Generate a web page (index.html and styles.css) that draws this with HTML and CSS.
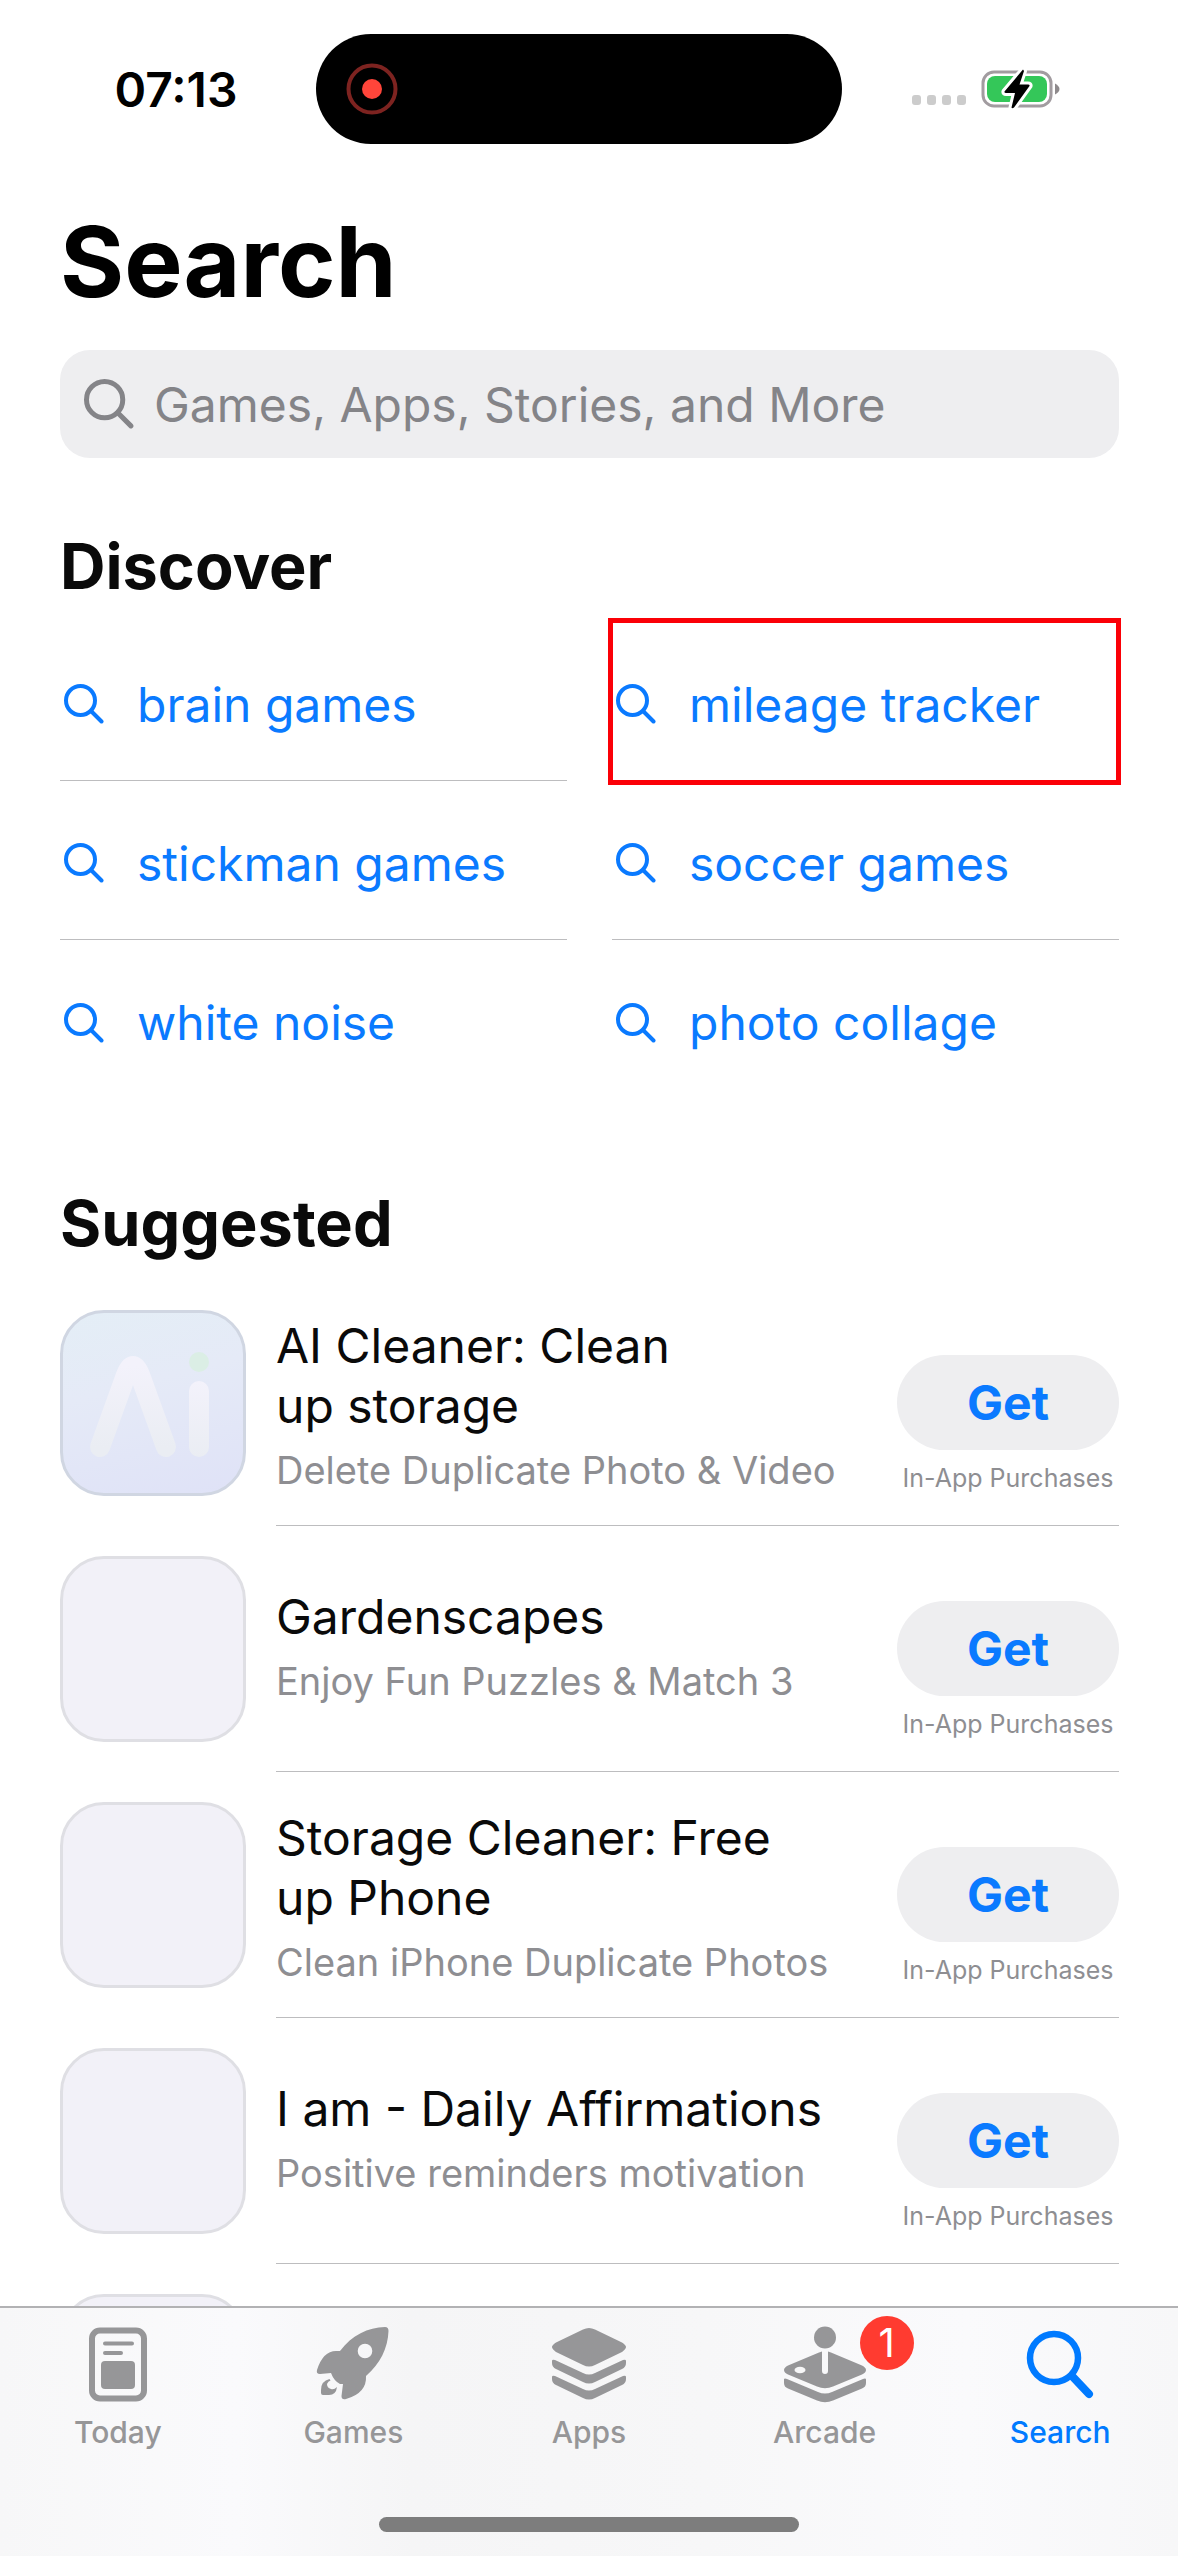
FILE: index.html
```html
<!DOCTYPE html>
<html lang="en">
<head>
<meta charset="utf-8">
<meta name="viewport" content="width=device-width, initial-scale=1">
<title>Search</title>
<link rel="stylesheet" href="styles.css">
</head>
<body>
<svg class="sprite" aria-hidden="true">
  <symbol id="lens" viewBox="0 0 40 40"><circle cx="16.500" cy="16.500" r="14.500"/><path d="M27 27L37.500 37.500"/></symbol>
</svg>
<div class="screen">
  <header class="status">
    <time class="clock">07:13</time>
    <div class="island">
      <svg class="record" viewBox="0 0 52 52" aria-hidden="true"><circle cx="26" cy="26" r="23.500" fill="none" stroke="#7d2320" stroke-width="4"/><circle cx="26" cy="26" r="10" fill="#ff453a"/></svg>
    </div>
    <div class="indicators">
      <span class="signal"><i></i><i></i><i></i><i></i></span>
      <svg class="battery" viewBox="0 0 80 40" aria-hidden="true">
        <rect x="2" y="3" width="68" height="34" rx="11" fill="none" stroke="#a29ca0" stroke-width="3"/>
        <rect x="6" y="7" width="60" height="26" rx="8" fill="#34c759"/>
        <path d="M74 14.500Q78.500 17 78.500 20T74 25.500Z" fill="#8e8a8c"/>
        <path d="M42 .5L23.500 22.500Q23 24 25 24H34L30.500 38.500Q31 40 33 38.500L48.500 17Q49 15.500 47 15.500H38.500L43 2Z" fill="#000" stroke="#fff" stroke-width="6" stroke-linejoin="round" paint-order="stroke"/>
      </svg>
    </div>
  </header>

  <main class="content">
    <h1>Search</h1>
    <form class="field" role="search">
      <label for="q"><svg class="lens" role="img" aria-label="Search"><use href="#lens"/></svg></label>
      <input id="q" type="search" placeholder="Games, Apps, Stories, and More">
    </form>

    <section>
      <h2>Discover</h2>
      <ul class="topics">
        <li><a href="#"><svg class="lens" aria-hidden="true"><use href="#lens"/></svg>brain games</a></li>
        <li class="highlighted"><a href="#"><svg class="lens" aria-hidden="true"><use href="#lens"/></svg>mileage tracker</a></li>
        <li><a href="#"><svg class="lens" aria-hidden="true"><use href="#lens"/></svg>stickman games</a></li>
        <li><a href="#"><svg class="lens" aria-hidden="true"><use href="#lens"/></svg>soccer games</a></li>
        <li><a href="#"><svg class="lens" aria-hidden="true"><use href="#lens"/></svg>white noise</a></li>
        <li><a href="#"><svg class="lens" aria-hidden="true"><use href="#lens"/></svg>photo collage</a></li>
      </ul>
    </section>

    <section class="suggested">
      <h2>Suggested</h2>
      <ul class="apps">
        <li class="app">
          <span class="app-icon app-icon-cleaner">
            <svg viewBox="0 0 180 180" aria-hidden="true">
              <defs><linearGradient id="ink" x1="0" y1="0" x2="0" y2="1"><stop offset="0" stop-color="#f3f2fb"/><stop offset="1" stop-color="#eaedf3"/></linearGradient></defs>
              <path d="M37 134L63 62Q70 44 77 62L103 134" fill="none" stroke="url(#ink)" stroke-width="20" stroke-linecap="round" stroke-linejoin="round"/>
              <rect x="126" y="68" width="20" height="76" rx="10" fill="url(#ink)"/>
              <circle cx="136" cy="49" r="10" fill="#dbeee5"/>
            </svg>
          </span>
          <div class="app-body">
            <div class="app-text app-text-wrapped"><h3>AI Cleaner: Clean<br>up storage</h3><p>Delete Duplicate Photo &amp; Video</p></div>
            <div class="offer"><button type="button">Get</button><small>In-App Purchases</small></div>
          </div>
        </li>
        <li class="app">
          <span class="app-icon"></span>
          <div class="app-body">
            <div class="app-text"><h3>Gardenscapes</h3><p>Enjoy Fun Puzzles &amp; Match 3</p></div>
            <div class="offer"><button type="button">Get</button><small>In-App Purchases</small></div>
          </div>
        </li>
        <li class="app">
          <span class="app-icon"></span>
          <div class="app-body">
            <div class="app-text app-text-wrapped"><h3>Storage Cleaner: Free<br>up Phone</h3><p>Clean iPhone Duplicate Photos</p></div>
            <div class="offer"><button type="button">Get</button><small>In-App Purchases</small></div>
          </div>
        </li>
        <li class="app">
          <span class="app-icon"></span>
          <div class="app-body">
            <div class="app-text"><h3>I am - Daily Affirmations</h3><p>Positive reminders motivation</p></div>
            <div class="offer"><button type="button">Get</button><small>In-App Purchases</small></div>
          </div>
        </li>
        <li class="app"><span class="app-icon"></span></li>
      </ul>
    </section>
  </main>

  <footer class="bar">
    <nav class="tabs">
      <a href="#"><svg width="84" height="78" viewBox="0 0 84 78" aria-hidden="true"><rect x="16" y="5.500" width="52" height="68" rx="8" fill="none" stroke="currentColor" stroke-width="6"/><path d="M29 18.500H56M29 28H45" stroke="currentColor" stroke-width="4" stroke-linecap="round"/><rect x="25" y="36" width="34" height="28" rx="4"/></svg>Today</a>
      <a href="#"><svg width="84" height="78" viewBox="11 14 84 78" aria-hidden="true"><path fill-rule="evenodd" d="M40 40C52 24 68 16.500 85 16Q88.500 16 88.500 20C88 37 80 53 66 65Q67 82 46 88Q41.500 89 41.500 85L43 73H40Q34 70 31 62L20 63Q16 63 17 59Q23 40 36 40ZM72.300 40a7.300 7.300 0 1 0-14.600 0a7.300 7.300 0 1 0 14.600 0Z"/><path d="M29.500 68Q21 70 21 79V82Q21 84 23 84H29Q36 84 37 76Q34 79 31 78Q27 77 27 73Q28 70 30.500 69.500Z"/></svg>Games</a>
      <a href="#"><svg width="84" height="78" viewBox="0 0 84 78" aria-hidden="true"><path d="M36 4.500Q42 1.500 48 4.500L75 17.500Q79 20 79 22T75 27L48 40Q42 43 36 40L9 27Q5 24 5 22T9 17.500Z"/><path d="M5 38V36Q5 34 8 35L36 48Q42 51 48 48L76 35Q79 34 79 36V38Q79 42 75 44L48 57Q42 60 36 57L9 44Q5 42 5 38Z"/><path d="M5 54V52Q5 50 8 51L36 64Q42 67 48 64L76 51Q79 50 79 52V54Q79 58 75 60L48 73Q42 76 36 73L9 60Q5 58 5 54Z"/></svg>Apps</a>
      <a href="#"><span class="tab-icon"><svg width="84" height="78" viewBox="0 0 84 78" aria-hidden="true"><circle cx="42" cy="12.500" r="11"/><path d="M36 27.500L39 26.500V46A3 3 0 0 0 45 46V26.500L48 27.500L79 40.500Q83 42.500 83 45T79 49.500L50 61.500Q42 65 34 61.500L5 49.500Q1 47.500 1 45T5 40.500Z"/><ellipse cx="17" cy="45" rx="5.500" ry="3.300" fill="#f7f7f8"/><path d="M1 55V54.500Q1 53 4 54L35 67Q42 70 49 67L80 54Q83 53 83 54.500V58Q83 62 79 63.500L50 75.500Q42 79 34 75.500L5 63.500Q1 62 1 58Z"/></svg><b class="badge">1</b></span>Arcade</a>
      <a href="#" class="active" aria-current="page"><svg width="84" height="78" viewBox="0 0 84 78" fill="none" stroke="currentColor" stroke-linecap="round" aria-hidden="true"><circle cx="36" cy="33" r="24" stroke-width="6.500"/><path d="M54 51L71 69" stroke-width="8"/></svg>Search</a>
    </nav>
    <div class="home-indicator"></div>
  </footer>
</div>
</body>
</html>
```
FILE: styles.css
```css
* { box-sizing: border-box; }

body {
  margin: 0;
  background: #fff;
  color: #000;
  font-family: Inter, "Liberation Sans", sans-serif;
}

h1, h2, h3, p, ul { margin: 0; padding: 0; font-weight: 400; }
ul { list-style: none; }
a { color: inherit; text-decoration: none; }

.sprite {
  position: absolute;
  width: 0;
  height: 0;
}

.screen {
  display: flex;
  flex-direction: column;
  height: 100vh;
}

/* Status bar */
.status {
  display: grid;
  grid-template-columns: 316fr 526px 336fr;
  align-items: center;
  flex: none;
  padding-top: 34px;
}
.clock {
  padding-left: 36px;
  text-align: center;
  font-size: 48px;
  font-weight: 600;
}
.island {
  display: flex;
  align-items: center;
  height: 110px;
  padding-left: 30px;
  border-radius: 55px;
  background: #000;
}
.record { width: 52px; height: 52px; }
.indicators {
  display: flex;
  align-items: center;
  gap: 15px;
  padding-left: 70px;
}
.signal { display: flex; gap: 6px; padding-top: 22px; }
.signal i { width: 9px; height: 10px; border-radius: 3px; background: #ccc; }
.battery { width: 80px; height: 40px; }

/* Content */
.content {
  flex: 1;
  min-height: 0;
  overflow: hidden;
  padding: 58px 59px 0 60px;
}
h1 { font-size: 98px; font-weight: 700; line-height: 120px; }
h2 { font-size: 63px; font-weight: 700; line-height: 80px; color: #0a0a0a; }

.lens {
  flex: none;
  width: 40px;
  height: 40px;
  fill: none;
  stroke: currentColor;
  stroke-width: 4;
  stroke-linecap: round;
}

.field {
  display: flex;
  align-items: center;
  height: 108px;
  margin: 28px 0 68px;
  padding: 0 24px;
  border-radius: 30px;
  background: #eeeef0;
  color: #848488;
}
.field label { display: flex; }
.field .lens { width: 50px; height: 50px; }
.field input {
  flex: 1;
  min-width: 0;
  padding: 0 0 0 20px;
  border: 0;
  outline: 0;
  background: none;
  color: inherit;
  font: inherit;
  font-size: 48px;
}
.field input::placeholder { color: #848488; opacity: 1; }

.topics {
  display: grid;
  grid-template-columns: 1fr 1fr;
  column-gap: 45px;
  padding-top: 16px;
}
.topics li { position: relative; }
.topics a {
  display: flex;
  align-items: center;
  gap: 33px;
  height: 159px;
  padding: 6px 4px 0;
  font-size: 48px;
  color: #0a7aff;
}
.topics li:nth-child(-n+4) a { border-bottom: 1px solid #bdbdbf; }
.highlighted::after {
  content: "";
  position: absolute;
  inset: -4px -2px -4px -4px;
  border: 5px solid #fb0007;
  pointer-events: none;
}

.suggested { padding-top: 84px; }
.apps { padding-top: 17px; }
.app {
  display: flex;
  gap: 30px;
  height: 246px;
}
.app-icon {
  flex: none;
  width: 186px;
  height: 186px;
  margin-top: 30px;
  border: 3px solid #dfdfe4;
  border-radius: 44px;
  background: #f2f1f8;
}
.app-icon-cleaner {
  border-color: #d0d6e2;
  background: linear-gradient(165deg, #e4eef6, #e5eaf7 40%, #dfe2f7);
}
.app-icon svg { display: block; }
.app-body {
  display: flex;
  flex: 1;
  justify-content: space-between;
  border-bottom: 1px solid #bdbdbf;
}
.app-text { align-self: center; }
.app-text-wrapped { padding-top: 10px; }
.app-text h3 { font-size: 48px; line-height: 60px; color: #0a0a0a; }
.app-text p { margin-top: 4px; font-size: 38px; line-height: 60px; color: #8e8e92; }
.offer {
  display: flex;
  flex-direction: column;
  align-items: center;
  gap: 13px;
  padding-top: 75px;
}
.offer button {
  width: 222px;
  height: 95px;
  border: 0;
  border-radius: 48px;
  background: #eeeef0;
  color: #0a7aff;
  font: inherit;
  font-size: 48px;
  font-weight: 700;
}
.offer small { font-size: 25px; line-height: 30px; color: #8e8e92; }

/* Tab bar */
.bar {
  flex: none;
  border-top: 2px solid #b2b2b4;
  background: linear-gradient(90deg, #f7f7f8, #fafafc 20%, #f5f5f6 35%, #f7f7f8 60%, #fafafc 82%, #f7f7f8);
}
.tabs {
  display: grid;
  grid-template-columns: repeat(5, 1fr);
  padding-top: 17px;
}
.tabs a {
  display: flex;
  flex-direction: column;
  align-items: center;
  gap: 11px;
  color: #969698;
  fill: currentColor;
  font-size: 30px;
  font-weight: 500;
  line-height: 36px;
}
.tabs .active { color: #007aff; }
.tab-icon { position: relative; display: flex; }
.badge {
  position: absolute;
  top: -9px;
  left: 77px;
  width: 54px;
  height: 54px;
  border-radius: 50%;
  background: #ff3b30;
  color: #fff;
  font-size: 40px;
  font-weight: 400;
  line-height: 54px;
  text-align: center;
}
.home-indicator {
  width: 420px;
  max-width: 60%;
  height: 15px;
  margin: 67px auto 24px;
  border-radius: 8px;
  background: #7d7d7d;
}
```
